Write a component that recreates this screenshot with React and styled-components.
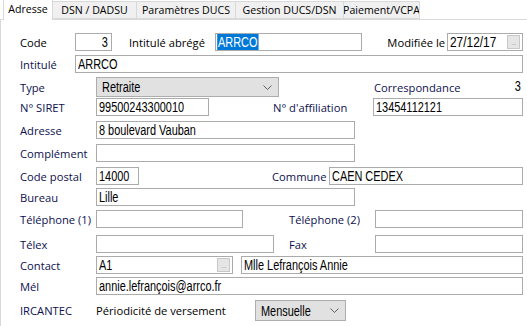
import styled, { createGlobalStyle } from "styled-components";

const Global = createGlobalStyle`
  html, body { margin: 0; padding: 0; background: #fff; }
  body { width: 527px; height: 326px; overflow: hidden; }
`;

const Window = styled.div`
  width: 527px;
  height: 326px;
  display: flex;
  flex-direction: column;
  background: #fff;
  font-family: "Open Sans", "Noto Sans", sans-serif;
`;

const TabBar = styled.div`
  display: flex;
  align-items: flex-end;
  height: 20px;
  padding-left: 3px;
  border-bottom: 1px solid #d9d9d9;
  box-sizing: border-box;
`;

const Tab = styled.div`
  flex-shrink: 0;
  height: ${(p) => (p.$active ? "21px" : "18px")};
  margin-bottom: ${(p) => (p.$active ? "-1px" : "0")};
  width: ${(p) => p.$w}px;
  box-sizing: border-box;
  display: flex;
  align-items: center;
  justify-content: center;
  font-size: 10.6px;
  color: #000;
  white-space: nowrap;
  overflow: hidden;
  background: ${(p) => (p.$active ? "#fff" : "#f0f0f0")};
  border: 1px solid #d9d9d9;
  border-bottom: ${(p) => (p.$active ? "none" : "1px solid #d9d9d9")};
  margin-right: -1px;
  padding-bottom: ${(p) => (p.$active ? "3px" : "0")};
`;

const Panel = styled.div`
  flex: 1;
  border-left: 1px solid #d9d9d9;
  display: flex;
  flex-direction: column;
  padding: 0 4px 0 19px;
`;

const Row = styled.div`
  display: flex;
  align-items: center;
  height: ${(p) => p.$h || 18}px;
  margin-top: ${(p) => p.$mt}px;
`;

const Label = styled.div`
  width: ${(p) => p.$w}px;
  margin-left: ${(p) => p.$ml || 0}px;
  flex-shrink: 0;
  font-size: 11.2px;
  color: ${(p) => (p.$dark ? "#000" : "#0d1050")};
  white-space: nowrap;
  text-align: ${(p) => (p.$right ? "right" : "left")};
  padding-right: ${(p) => (p.$right ? "2px" : "0")};
  box-sizing: border-box;
`;

const Spacer = styled.div`
  flex: 1;
`;

const Input = styled.div`
  width: ${(p) => (p.$w ? `${p.$w}px` : "auto")};
  flex: ${(p) => (p.$w ? "0 0 auto" : "1")};
  margin-left: ${(p) => p.$ml || 0}px;
  height: 18px;
  box-sizing: border-box;
  border: 1px solid #ababab;
  background: #fff;
  display: flex;
  align-items: center;
  justify-content: ${(p) => (p.$right ? "flex-end" : "flex-start")};
  padding: 0 ${(p) => (p.$right ? "3px" : "2px")} 0 2px;
  white-space: nowrap;
  overflow: hidden;
`;

const Text = styled.span`
  display: inline-block;
  font-family: "Liberation Sans", Arial, sans-serif;
  font-size: 14px;
  line-height: 16px;
  color: #000;
  white-space: nowrap;
  transform: scaleX(${(p) => p.$sx || 0.78});
  transform-origin: ${(p) => (p.$right ? "right" : "left")} center;
`;

const Selected = styled.span`
  background: #0078d7;
  color: #fff;
  padding: 0 1px;
  margin-left: -1px;
`;

const Dots = styled.div`
  margin-left: auto;
  width: 13px;
  height: 14px;
  box-sizing: border-box;
  background: #e5e5e5;
  border: 1px solid #c8c8c8;
  color: #a8a8a8;
  font-size: 8px;
  line-height: 14px;
  text-align: center;
  font-family: "Liberation Sans", sans-serif;
  letter-spacing: -0.5px;
`;

const Select = styled.div`
  width: ${(p) => p.$w}px;
  margin-left: ${(p) => p.$ml || 0}px;
  height: ${(p) => p.$h || 20}px;
  box-sizing: border-box;
  border: 1px solid #adadad;
  background: #e1e1e1;
  display: flex;
  align-items: center;
  padding: 0 6px 0 5px;
`;

const Chevron = () => (
  <svg width="9" height="5" viewBox="0 0 9 5" style={{ marginLeft: "auto" }}>
    <path d="M0.5 0.5 L4.5 4.5 L8.5 0.5" fill="none" stroke="#606060" strokeWidth="1" />
  </svg>
);

const Corner = styled.div`
  margin-left: auto;
  align-self: flex-start;
  margin-top: -3px;
  margin-right: 2px;
`;

const App = () => (
  <Window>
    <Global />
    <TabBar>
      <Tab $active $w={50}>Adresse</Tab>
      <Tab $w={85}>DSN / DADSU</Tab>
      <Tab $w={100}>Paramètres DUCS</Tab>
      <Tab $w={109}>Gestion DUCS/DSN</Tab>
      <Tab $w={77}>Paiement/VCPA</Tab>
    </TabBar>
    <Panel>
      <Row $mt={13}>
        <Label $w={55} $dark>Code</Label>
        <Input $w={37} $right>
          <Text $right>3</Text>
        </Input>
        <Label $w={86} $ml={17} $dark>Intitulé abrégé</Label>
        <Input $w={147}>
          <Text>
            <Selected>ARRCO</Selected>
          </Text>
        </Input>
        <Spacer />
        <Label $w={70} $right $dark>Modifiée le</Label>
        <Input $w={76}>
          <Text $sx={0.85}>27/12/17</Text>
          <Dots>...</Dots>
        </Input>
      </Row>
      <Row $mt={4}>
        <Label $w={55}>Intitulé</Label>
        <Input>
          <Text>ARRCO</Text>
        </Input>
      </Row>
      <Row $mt={4} $h={20}>
        <Label $w={76}>Type</Label>
        <Select $w={183}>
          <Text>Retraite</Text>
          <Chevron />
        </Select>
        <Label $w={90} $ml={95}>Correspondance</Label>
        <Corner>
          <Text $right>3</Text>
        </Corner>
      </Row>
      <Row $mt={1}>
        <Label $w={76}>N° SIRET</Label>
        <Input $w={113}>
          <Text>99500243300010</Text>
        </Input>
        <Label $w={100} $ml={64}>N° d'affiliation</Label>
        <Input>
          <Text>13454112121</Text>
        </Input>
      </Row>
      <Row $mt={5}>
        <Label $w={76}>Adresse</Label>
        <Input $w={259}>
          <Text>8 boulevard Vauban</Text>
        </Input>
      </Row>
      <Row $mt={5}>
        <Label $w={76}>Complément</Label>
        <Input $w={259} />
      </Row>
      <Row $mt={5}>
        <Label $w={76}>Code postal</Label>
        <Input $w={43}>
          <Text>14000</Text>
        </Input>
        <Label $w={57} $ml={133}>Commune</Label>
        <Input>
          <Text>CAEN CEDEX</Text>
        </Input>
      </Row>
      <Row $mt={3}>
        <Label $w={76}>Bureau</Label>
        <Input $w={259}>
          <Text>Lille</Text>
        </Input>
      </Row>
      <Row $mt={4}>
        <Label $w={76}>Téléphone (1)</Label>
        <Input $w={147} />
        <Label $w={86} $ml={46}>Téléphone (2)</Label>
        <Input />
      </Row>
      <Row $mt={7}>
        <Label $w={76}>Télex</Label>
        <Input $w={178} />
        <Label $w={86} $ml={15}>Fax</Label>
        <Input />
      </Row>
      <Row $mt={3}>
        <Label $w={76}>Contact</Label>
        <Input $w={137}>
          <Text>A1</Text>
          <Dots>...</Dots>
        </Input>
        <Input $ml={8}>
          <Text>Mlle Lefrançois Annie</Text>
        </Input>
      </Row>
      <Row $mt={3}>
        <Label $w={76}>Mél</Label>
        <Input>
          <Text>annie.lefrançois@arrco.fr</Text>
        </Input>
      </Row>
      <Row $mt={5} $h={21}>
        <Label $w={76}>IRCANTEC</Label>
        <Label $w={159} $dark>Périodicité de versement</Label>
        <Select $w={91} $h={21}>
          <Text>Mensuelle</Text>
          <Chevron />
        </Select>
      </Row>
    </Panel>
  </Window>
);

export default App;
